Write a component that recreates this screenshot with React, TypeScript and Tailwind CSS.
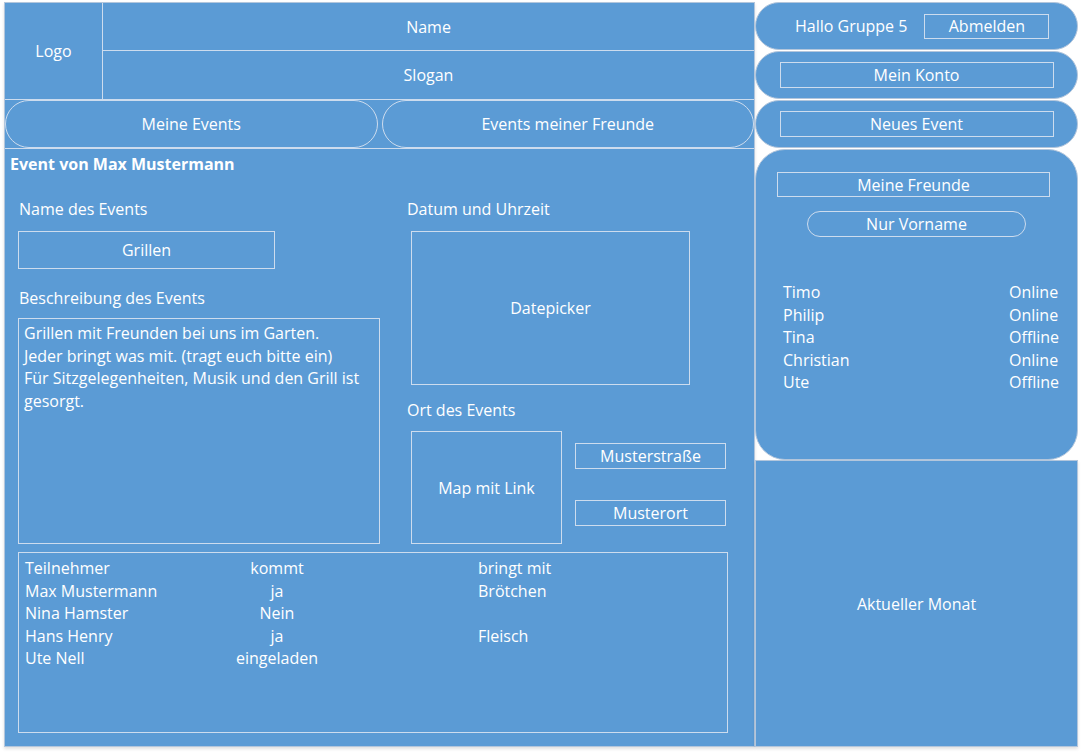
import React from 'react'

const line = 'border border-[#cddcee]'
const panel = 'bg-[#5b9bd5] border border-[#b3c6dc]'

const teilnehmer = [
  { name: 'Teilnehmer', kommt: 'kommt', bringt: 'bringt mit' },
  { name: 'Max Mustermann', kommt: 'ja', bringt: 'Brötchen' },
  { name: 'Nina Hamster', kommt: 'Nein', bringt: '' },
  { name: 'Hans Henry', kommt: 'ja', bringt: 'Fleisch' },
  { name: 'Ute Nell', kommt: 'eingeladen', bringt: '' },
]

const freunde = [
  { name: 'Timo', status: 'Online' },
  { name: 'Philip', status: 'Online' },
  { name: 'Tina', status: 'Offline' },
  { name: 'Christian', status: 'Online' },
  { name: 'Ute', status: 'Offline' },
]

export default function App() {
  return (
    <div className="w-[1084px] h-[755px] bg-white flex pt-[2px] pl-[4px] text-white text-[16px] font-['Open_Sans',sans-serif]">
      {/* linke Seite */}
      <div className={`w-[751px] h-[745px] flex flex-col shadow-[0_2px_3px_rgba(0,0,0,0.12)] ${panel}`}>
        <header className="flex h-[97px] border-b border-[#cddcee]">
          <div className="w-[98px] border-r border-[#cddcee] flex items-center justify-center">Logo</div>
          <div className="flex-1 flex flex-col">
            <div className="h-[48px] border-b border-[#cddcee] flex items-center justify-center">Name</div>
            <div className="flex-1 flex items-center justify-center">Slogan</div>
          </div>
        </header>

        <nav className="h-[49px] flex gap-[4px] border-b border-[#cddcee]">
          <button className={`flex-1 rounded-full ${line}`}>Meine Events</button>
          <button className={`flex-1 rounded-full ${line}`}>Events meiner Freunde</button>
        </nav>

        <main className="flex-1 pl-[5px] pt-[4px]">
          <h2 className="font-bold leading-[22px]">Event von Max Mustermann</h2>

          <div className="flex ml-[8px] mt-[23px]">
            <div className="w-[362px] flex flex-col">
              <label className="pl-[1px] leading-[22px]">Name des Events</label>
              <div className={`mt-[11px] w-[257px] h-[38px] flex items-center justify-center ${line}`}>Grillen</div>
              <label className="pl-[1px] mt-[18px] leading-[22px]">Beschreibung des Events</label>
              <div className={`mt-[9px] h-[226px] px-[5px] pt-[3px] leading-[22.5px] ${line}`}>
                Grillen mit Freunden bei uns im Garten.
                <br />
                Jeder bringt was mit. (tragt euch bitte ein)
                <br />
                Für Sitzgelegenheiten, Musik und den Grill ist gesorgt.
              </div>
            </div>

            <div className="ml-[27px] flex flex-col">
              <label className="leading-[22px]">Datum und Uhrzeit</label>
              <div className={`ml-[4px] mt-[11px] w-[279px] h-[154px] flex items-center justify-center ${line}`}>Datepicker</div>
              <label className="mt-[14px] leading-[22px]">Ort des Events</label>
              <div className="ml-[4px] mt-[10px] flex">
                <div className={`w-[151px] h-[113px] flex items-center justify-center ${line}`}>Map mit Link</div>
                <div className="ml-[13px] pt-[12px] flex flex-col">
                  <div className={`w-[151px] h-[26px] flex items-center justify-center ${line}`}>Musterstraße</div>
                  <div className={`mt-[31px] w-[151px] h-[26px] flex items-center justify-center ${line}`}>Musterort</div>
                </div>
              </div>
            </div>
          </div>

          <div className={`ml-[8px] mt-[8px] w-[710px] h-[181px] pl-[6px] pt-[4px] ${line}`}>
            <div className="grid grid-cols-[190px_124px_1fr] leading-[22.5px]">
              {teilnehmer.map((t) => (
                <React.Fragment key={t.name}>
                  <span className="whitespace-nowrap">{t.name}</span>
                  <span className="whitespace-nowrap text-center">{t.kommt}</span>
                  <span className="whitespace-nowrap pl-[139px]">{t.bringt}</span>
                </React.Fragment>
              ))}
            </div>
          </div>
        </main>
      </div>

      {/* rechte Seite */}
      <aside className="w-[323px] h-[745px] flex flex-col">
        <div className={`h-[48px] rounded-full flex items-center pl-[39px] ${panel}`}>
          <span>Hallo Gruppe 5</span>
          <button className={`ml-[17px] w-[125px] h-[25px] flex items-center justify-center ${line}`}>Abmelden</button>
        </div>
        <div className={`mt-[1px] h-[48px] rounded-full flex items-center justify-center ${panel}`}>
          <button className={`w-[274px] h-[26px] flex items-center justify-center ${line}`}>Mein Konto</button>
        </div>
        <div className={`mt-[1px] h-[48px] rounded-full flex items-center justify-center ${panel}`}>
          <button className={`w-[274px] h-[26px] flex items-center justify-center ${line}`}>Neues Event</button>
        </div>

        <section className={`mt-[1px] h-[311px] rounded-[30px] flex flex-col pt-[22px] ${panel}`}>
          <div className={`ml-[21px] w-[273px] h-[25px] flex items-center justify-center ${line}`}>Meine Freunde</div>
          <button className={`self-center mt-[14px] w-[219px] h-[26px] rounded-full flex items-center justify-center ${line}`}>Nur Vorname</button>
          <div className="mt-[44px] pl-[27px] grid grid-cols-[226px_auto] leading-[22.5px]">
            {freunde.map((f) => (
              <React.Fragment key={f.name}>
                <span>{f.name}</span>
                <span>{f.status}</span>
              </React.Fragment>
            ))}
          </div>
        </section>

        <section className={`h-[287px] flex items-center justify-center shadow-[0_2px_3px_rgba(0,0,0,0.12)] ${panel}`}>
          Aktueller Monat
        </section>
      </aside>
    </div>
  )
}
